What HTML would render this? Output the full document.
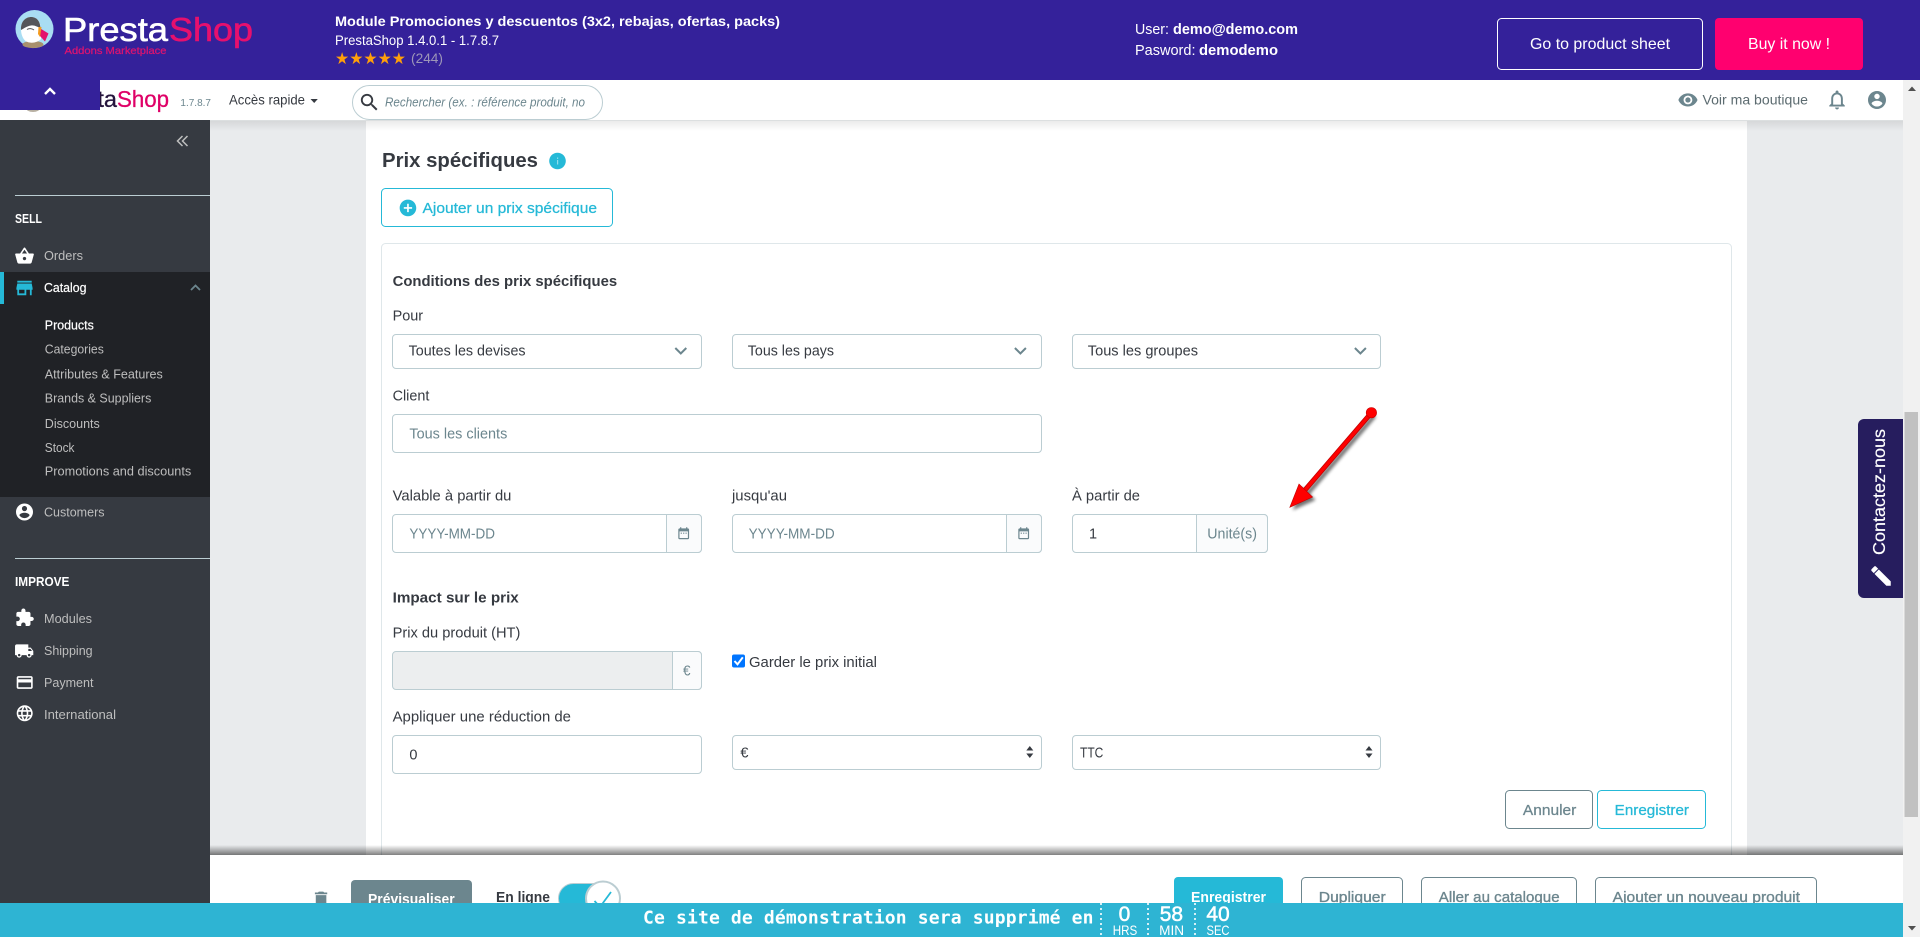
<!DOCTYPE html>
<html lang="fr">
<head>
<meta charset="utf-8">
<title>PrestaShop – Prix spécifiques</title>
<style>
html,body{margin:0;padding:0;width:1920px;height:937px;overflow:hidden;background:#e9ebed}
svg{display:block}
text{font-family:"Liberation Sans",Arial,sans-serif;white-space:pre}
.l{font-size:14.5px;fill:#363a41}
.h{font-size:14.5px;font-weight:700;fill:#363a41}
.p{font-size:14.5px;fill:#6c868e}
.s{font-size:13px;fill:#bebebe}
.bt{font-size:14.5px;fill:#6c868e;stroke:#6c868e;stroke-width:.35}
.box{fill:#fff;stroke:#bbcdd2;stroke-width:1}
.add{fill:#fafbfc;stroke:#bbcdd2;stroke-width:1}
.chev{fill:none;stroke:#6c868e;stroke-width:2}
</style>
</head>
<body>
<svg xmlns="http://www.w3.org/2000/svg" width="1920" height="937" viewBox="0 0 1920 937">
<defs>
<linearGradient id="gh" x1="0" y1="0" x2="0" y2="1"><stop offset="0" stop-color="#000" stop-opacity=".09"/><stop offset="1" stop-color="#000" stop-opacity="0"/></linearGradient>
<linearGradient id="gb" x1="0" y1="0" x2="0" y2="1"><stop offset="0" stop-color="#000" stop-opacity="0"/><stop offset="1" stop-color="#000" stop-opacity=".5"/></linearGradient>
<filter id="ash" x="-30%" y="-30%" width="160%" height="160%"><feGaussianBlur stdDeviation="1.6"/></filter>
</defs>

<!-- page background -->
<rect x="0" y="0" width="1920" height="937" fill="#e9ebed"/>
<rect x="1903" y="80" width="17" height="857" fill="#f1f1f1"/>

<!-- content panel -->
<rect x="366" y="120" width="1381" height="760" fill="#fff"/>

<g>
<text x="382" y="167" font-size="20.5" font-weight="700" fill="#363a41" textLength="156" lengthAdjust="spacingAndGlyphs">Prix spécifiques</text>
<circle cx="557.5" cy="161" r="8.3" fill="#25b9d7"/>
<rect x="557" y="160" width="1.2" height="4.5" fill="#8fdcec"/><rect x="557" y="157.5" width="1.2" height="1.4" fill="#8fdcec"/>

<rect x="381.5" y="188.5" width="231" height="38" rx="4" fill="#fff" stroke="#25b9d7"/>
<path transform="translate(398,198) scale(.83)" fill="#25b9d7" d="M12 2C6.48 2 2 6.48 2 12s4.48 10 10 10 10-4.48 10-10S17.52 2 12 2zm5 11h-4v4h-2v-4H7v-2h4V7h2v4h4v2z"/>
<text x="422.5" y="213" font-size="14.5" font-weight="400" fill="#25b9d7" stroke="#25b9d7" stroke-width=".25" textLength="174.5" lengthAdjust="spacingAndGlyphs">Ajouter un prix spécifique</text>

<rect x="381.5" y="243.5" width="1350" height="650" rx="4" fill="#fff" stroke="#dfe7ea"/>

<text class="h" x="392.6" y="286" textLength="224.5" lengthAdjust="spacingAndGlyphs">Conditions des prix spécifiques</text>

<text class="l" x="392.6" y="320.5" textLength="30.5" lengthAdjust="spacingAndGlyphs">Pour</text>
<rect class="box" x="392.5" y="334.5" width="309" height="34" rx="3.5"/>
<rect class="box" x="732.5" y="334.5" width="309" height="34" rx="3.5"/>
<rect class="box" x="1072.5" y="334.5" width="308" height="34" rx="3.5"/>
<text class="l" x="408.6" y="355.7" textLength="117" lengthAdjust="spacingAndGlyphs">Toutes les devises</text>
<text class="l" x="747.8" y="355.7" textLength="86.2" lengthAdjust="spacingAndGlyphs">Tous les pays</text>
<text class="l" x="1087.8" y="355.7" textLength="110.2" lengthAdjust="spacingAndGlyphs">Tous les groupes</text>
<polyline class="chev" points="675.3,348 680.8,353.5 686.3,348"/>
<polyline class="chev" points="1014.9,348 1020.4,353.5 1025.9,348"/>
<polyline class="chev" points="1354.9,348 1360.4,353.5 1365.9,348"/>

<text class="l" x="392.6" y="400.5" textLength="36.8" lengthAdjust="spacingAndGlyphs">Client</text>
<rect class="box" x="392.5" y="414.5" width="649" height="38" rx="3.5"/>
<text class="p" x="409.4" y="438.7" textLength="97.9" lengthAdjust="spacingAndGlyphs">Tous les clients</text>

<text class="l" x="392.6" y="500.5" textLength="118.8" lengthAdjust="spacingAndGlyphs">Valable à partir du</text>
<text class="l" x="732" y="500.5" textLength="55" lengthAdjust="spacingAndGlyphs">jusqu'au</text>
<text class="l" x="1072" y="500.5" textLength="68" lengthAdjust="spacingAndGlyphs">À partir de</text>

<rect class="box" x="392.5" y="514.5" width="309" height="38" rx="3.5"/>
<path class="add" d="M666.5 514.5H698a3.5 3.5 0 0 1 3.5 3.5V549a3.5 3.5 0 0 1-3.5 3.5H666.5z"/>
<path transform="translate(676.5,526) scale(.6)" fill="#6c868e" d="M9 11H7v2h2v-2zm4 0h-2v2h2v-2zm4 0h-2v2h2v-2zm2-7h-1V2h-2v2H8V2H6v2H5c-1.11 0-1.99.9-1.99 2L3 20c0 1.1.89 2 2 2h14c1.1 0 2-.9 2-2V6c0-1.1-.9-2-2-2zm0 16H5V9h14v11z"/>
<text class="p" x="409.4" y="538.7" textLength="85.6" lengthAdjust="spacingAndGlyphs">YYYY-MM-DD</text>

<rect class="box" x="732.5" y="514.5" width="309" height="38" rx="3.5"/>
<path class="add" d="M1006.5 514.5H1038a3.5 3.5 0 0 1 3.5 3.5V549a3.5 3.5 0 0 1-3.5 3.5H1006.5z"/>
<path transform="translate(1016.5,526) scale(.6)" fill="#6c868e" d="M9 11H7v2h2v-2zm4 0h-2v2h2v-2zm4 0h-2v2h2v-2zm2-7h-1V2h-2v2H8V2H6v2H5c-1.11 0-1.99.9-1.99 2L3 20c0 1.1.89 2 2 2h14c1.1 0 2-.9 2-2V6c0-1.1-.9-2-2-2zm0 16H5V9h14v11z"/>
<text class="p" x="748.6" y="538.7" textLength="86.1" lengthAdjust="spacingAndGlyphs">YYYY-MM-DD</text>

<rect class="box" x="1072.5" y="514.5" width="195" height="38" rx="3.5"/>
<path class="add" d="M1196.5 514.5H1264a3.5 3.5 0 0 1 3.5 3.5V549a3.5 3.5 0 0 1-3.5 3.5H1196.5z"/>
<text class="l" x="1089" y="538.7">1</text>
<text class="p" x="1207.3" y="538.7" textLength="49.7" lengthAdjust="spacingAndGlyphs">Unité(s)</text>

<text class="h" x="392.6" y="602.7" textLength="126.2" lengthAdjust="spacingAndGlyphs">Impact sur le prix</text>
<text class="l" x="392.6" y="637.5" textLength="127.8" lengthAdjust="spacingAndGlyphs">Prix du produit (HT)</text>

<rect x="392.5" y="651.5" width="309" height="38" rx="3.5" fill="#eceeef" stroke="#bbcdd2"/>
<path class="add" d="M672.5 651.5H698a3.5 3.5 0 0 1 3.5 3.5V686a3.5 3.5 0 0 1-3.5 3.5H672.5z"/>
<text class="p" x="683" y="675.7" textLength="7.5" lengthAdjust="spacingAndGlyphs">€</text>

<rect x="732" y="654.5" width="13" height="13" rx="2" fill="#0075ff"/>
<polyline points="734.5,661 737.5,664.3 742.8,657.3" fill="none" stroke="#fff" stroke-width="2"/>
<text class="l" x="749" y="667" textLength="128" lengthAdjust="spacingAndGlyphs">Garder le prix initial</text>

<text class="l" x="392.6" y="721.5" textLength="178.4" lengthAdjust="spacingAndGlyphs">Appliquer une réduction de</text>
<rect class="box" x="392.5" y="735.5" width="309" height="38" rx="3.5"/>
<text class="l" x="409.4" y="759.7">0</text>

<rect class="box" x="732.5" y="735.5" width="309" height="34" rx="3.5"/>
<text class="l" x="740.4" y="757.7">€</text>
<polygon points="1026.3,750.5 1029.8,746 1033.3,750.5" fill="#363a41"/>
<polygon points="1026.3,753.5 1029.8,758 1033.3,753.5" fill="#363a41"/>

<rect class="box" x="1072.5" y="735.5" width="308" height="34" rx="3.5"/>
<text class="l" x="1080" y="757.7" textLength="23.3" lengthAdjust="spacingAndGlyphs">TTC</text>
<polygon points="1365.5,750.5 1369,746 1372.5,750.5" fill="#363a41"/>
<polygon points="1365.5,753.5 1369,758 1372.5,753.5" fill="#363a41"/>

<rect x="1505.5" y="790.5" width="87" height="38" rx="4" fill="#fff" stroke="#6c868e"/>
<text class="l" x="1522.9" y="815" style="fill:#6c868e" stroke="#6c868e" stroke-width=".25" textLength="53.4" lengthAdjust="spacingAndGlyphs">Annuler</text>
<rect x="1597.5" y="790.5" width="108" height="38" rx="4" fill="#fff" stroke="#25b9d7"/>
<text class="l" x="1614.7" y="815" style="fill:#25b9d7" stroke="#25b9d7" stroke-width=".25" textLength="74.3" lengthAdjust="spacingAndGlyphs">Enregistrer</text>

<!-- red annotation arrow -->
<g transform="translate(3,3)" opacity=".55" filter="url(#ash)">
<line x1="1371.4" y1="412.7" x2="1305" y2="490" stroke="#000" stroke-width="4.5"/>
<polygon points="1289.8,507.3 1299,484 1312.6,497" fill="#000"/>
</g>
<line x1="1371.4" y1="412.7" x2="1305" y2="490" stroke="#c00000" stroke-width="5"/>
<line x1="1371.4" y1="412.7" x2="1305" y2="490" stroke="#ff0000" stroke-width="3.4"/>
<circle cx="1371.4" cy="412.7" r="5.2" fill="#ff0000" stroke="#c80000" stroke-width=".6"/>
<polygon points="1289.8,507.3 1299,484 1312.6,497" fill="#ff0000" stroke="#c00000" stroke-width=".6"/>
</g>

<!-- header -->
<rect x="210" y="120" width="1693" height="11" fill="url(#gh)"/>
<rect x="0" y="80" width="1903" height="40" fill="#fff"/>
<rect x="0" y="120" width="1903" height="1" fill="#dcdfe0"/>
<ellipse cx="33" cy="108" rx="7" ry="4" fill="#b8b0a2"/>
<text x="117" y="107" text-anchor="end" font-size="23.5" fill="#25143c" stroke="#25143c" stroke-width=".3">Presta</text>
<text x="117" y="107" font-size="23.5" fill="#df0067" stroke="#df0067" stroke-width=".3" textLength="52" lengthAdjust="spacingAndGlyphs">Shop</text>
<text x="180.4" y="106" font-size="10.5" fill="#6c868e" textLength="30.6" lengthAdjust="spacingAndGlyphs">1.7.8.7</text>
<text x="229" y="104.5" font-size="14" fill="#363a41" textLength="76" lengthAdjust="spacingAndGlyphs">Accès rapide</text>
<polygon points="310.5,99 317.8,99 314.2,103" fill="#363a41"/>
<rect x="352.5" y="85.5" width="250" height="34" rx="17" fill="#fff" stroke="#bbcdd2"/>
<path transform="translate(358,91) scale(.95)" fill="#363a41" d="M15.5 14h-.79l-.28-.27C15.41 12.59 16 11.11 16 9.5 16 5.91 13.09 3 9.5 3S3 5.91 3 9.5 5.91 16 9.5 16c1.61 0 3.09-.59 4.23-1.57l.27.28v.79l5 4.99L20.49 19l-4.99-5zm-6 0C7.01 14 5 11.99 5 9.5S7.01 5 9.5 5 14 7.01 14 9.5 11.99 14 9.5 14z"/>
<text x="385" y="106.5" font-size="13" font-style="italic" fill="#6c868e" textLength="200" lengthAdjust="spacingAndGlyphs">Rechercher (ex. : référence produit, no</text>
<path transform="translate(1677.5,89.5) scale(.87)" fill="#6c868e" d="M12 4.5C7 4.5 2.73 7.61 1 12c1.73 4.39 6 7.5 11 7.5s9.27-3.11 11-7.5c-1.73-4.39-6-7.5-11-7.5zM12 17c-2.76 0-5-2.24-5-5s2.24-5 5-5 5 2.24 5 5-2.24 5-5 5zm0-8c-1.66 0-3 1.34-3 3s1.34 3 3 3 3-1.34 3-3-1.34-3-3-3z"/>
<text x="1702.5" y="104.5" font-size="14" fill="#5c6b70" textLength="105.5" lengthAdjust="spacingAndGlyphs">Voir ma boutique</text>
<path transform="translate(1825.4,88.1) scale(.97)" fill="#6c868e" d="M12 22c1.1 0 2-.9 2-2h-4c0 1.1.9 2 2 2zm6-6v-5c0-3.07-1.63-5.64-4.5-6.32V4c0-.83-.67-1.5-1.5-1.5s-1.5.67-1.5 1.5v.68C7.64 5.36 6 7.92 6 11v5l-2 2v1h16v-1l-2-2zm-2 1H8v-6c0-2.48 1.51-4.5 4-4.5s4 2.02 4 4.5v6z"/>
<path transform="translate(1866.2,89.2) scale(.9)" fill="#6c868e" d="M12 2C6.48 2 2 6.48 2 12s4.48 10 10 10 10-4.48 10-10S17.52 2 12 2zm0 3c1.66 0 3 1.34 3 3s-1.34 3-3 3-3-1.34-3-3 1.34-3 3-3zm0 14.2c-2.5 0-4.71-1.28-6-3.22.03-1.99 4-3.08 6-3.08 1.99 0 5.97 1.09 6 3.08-1.29 1.94-3.5 3.22-6 3.22z"/>

<!-- sidebar -->
<rect x="0" y="120" width="210" height="783" fill="#363a41"/>
<path d="M182.5 136l-5 5 5 5M187.5 136l-5 5 5 5" fill="none" stroke="#bebebe" stroke-width="1.5"/>
<rect x="15" y="195" width="195" height="1" fill="#bbcdd2"/>
<text x="15" y="223" font-size="12.5" font-weight="700" fill="#fff" textLength="27" lengthAdjust="spacingAndGlyphs">SELL</text>
<path transform="translate(14.3,245.8) scale(.85)" fill="#fff" d="M17.21 9l-4.38-6.56c-.19-.28-.51-.42-.83-.42-.32 0-.64.14-.83.43L6.79 9H2c-.55 0-1 .45-1 1 0 .09.01.18.04.27l2.54 9.27c.23.84 1 1.46 1.92 1.46h13c.92 0 1.69-.62 1.93-1.46l2.54-9.27L23 10c0-.55-.45-1-1-1h-4.79zM9 9l3-4.4L15 9H9zm3 8c-1.1 0-2-.9-2-2s.9-2 2-2 2 .9 2 2-.9 2-2 2z"/>
<text class="s" x="44" y="260" textLength="39" lengthAdjust="spacingAndGlyphs">Orders</text>

<rect x="0" y="272" width="210" height="225" fill="#202226"/>
<rect x="0" y="272" width="4" height="32" fill="#25b9d7"/>
<path transform="translate(13.7,277.2) scale(.9)" fill="#25b9d7" d="M20 4H4v2h16V4zm1 10v-2l-1-5H4l-1 5v2h1v6h10v-6h4v6h2v-6h1zm-9 4H6v-4h6v4z"/>
<text x="44" y="292" font-size="13" fill="#fff" stroke="#fff" stroke-width=".2" textLength="42.5" lengthAdjust="spacingAndGlyphs">Catalog</text>
<polyline points="191,290 195.5,285.5 200,290" fill="none" stroke="#6c868e" stroke-width="1.8"/>
<text x="44.8" y="329.5" font-size="13" fill="#fff" stroke="#fff" stroke-width=".2" textLength="49" lengthAdjust="spacingAndGlyphs">Products</text>
<text class="s" x="44.8" y="353.5" textLength="59" lengthAdjust="spacingAndGlyphs">Categories</text>
<text class="s" x="44.8" y="378.5" textLength="118" lengthAdjust="spacingAndGlyphs">Attributes &amp; Features</text>
<text class="s" x="44.8" y="402.5" textLength="106.5" lengthAdjust="spacingAndGlyphs">Brands &amp; Suppliers</text>
<text class="s" x="44.8" y="428" textLength="55" lengthAdjust="spacingAndGlyphs">Discounts</text>
<text class="s" x="44.8" y="452" textLength="29.7" lengthAdjust="spacingAndGlyphs">Stock</text>
<text class="s" x="44.8" y="475.7" textLength="146.5" lengthAdjust="spacingAndGlyphs">Promotions and discounts</text>

<path transform="translate(14.3,501.8) scale(.85)" fill="#fff" d="M12 2C6.48 2 2 6.48 2 12s4.48 10 10 10 10-4.48 10-10S17.52 2 12 2zm0 3c1.66 0 3 1.34 3 3s-1.34 3-3 3-3-1.34-3-3 1.34-3 3-3zm0 14.2c-2.5 0-4.71-1.28-6-3.22.03-1.99 4-3.08 6-3.08 1.99 0 5.97 1.09 6 3.08-1.29 1.94-3.5 3.22-6 3.22z"/>
<text class="s" x="44" y="516.7" textLength="60.5" lengthAdjust="spacingAndGlyphs">Customers</text>
<rect x="15" y="558" width="195" height="1" fill="#bbcdd2"/>
<text x="15" y="586" font-size="12.5" font-weight="700" fill="#fff" textLength="54.4" lengthAdjust="spacingAndGlyphs">IMPROVE</text>
<path transform="translate(14.7,607.7) scale(.83)" fill="#fff" d="M20.5 11H19V7c0-1.1-.9-2-2-2h-4V3.5C13 2.12 11.88 1 10.5 1S8 2.12 8 3.5V5H4c-1.1 0-1.99.9-1.99 2v3.8H3.5c1.49 0 2.7 1.21 2.7 2.7s-1.21 2.7-2.7 2.7H2V20c0 1.1.9 2 2 2h3.8v-1.5c0-1.49 1.21-2.7 2.7-2.7 1.49 0 2.7 1.21 2.7 2.7V22H17c1.1 0 2-.9 2-2v-4h1.5c1.38 0 2.5-1.12 2.5-2.5S21.88 11 20.5 11z"/>
<text class="s" x="44" y="623" textLength="48" lengthAdjust="spacingAndGlyphs">Modules</text>
<path transform="translate(14.2,641) scale(.83)" fill="#fff" d="M20 8h-3V4H3c-1.1 0-2 .9-2 2v11h2c0 1.66 1.34 3 3 3s3-1.34 3-3h6c0 1.66 1.34 3 3 3s3-1.34 3-3h2v-5l-3-4zM6 18.5c-.83 0-1.5-.67-1.5-1.5s.67-1.5 1.5-1.5 1.5.67 1.5 1.5-.67 1.5-1.5 1.5zm13.5-9l1.96 2.5H17V9.5h2.5zm-1.5 9c-.83 0-1.5-.67-1.5-1.5s.67-1.5 1.5-1.5 1.5.67 1.5 1.5-.67 1.5-1.5 1.5z"/>
<text class="s" x="44" y="655" textLength="48.6" lengthAdjust="spacingAndGlyphs">Shipping</text>
<path transform="translate(15.1,672.9) scale(.8)" fill="#fff" d="M20 4H4c-1.11 0-1.99.89-1.99 2L2 18c0 1.11.89 2 2 2h16c1.11 0 2-.89 2-2V6c0-1.11-.89-2-2-2zm0 14H4v-6h16v6zm0-10H4V6h16v2z"/>
<text class="s" x="44" y="687" textLength="49.5" lengthAdjust="spacingAndGlyphs">Payment</text>
<path transform="translate(15.1,703.7) scale(.8)" fill="#fff" d="M11.99 2C6.47 2 2 6.48 2 12s4.47 10 9.99 10C17.52 22 22 17.52 22 12S17.52 2 11.99 2zm6.93 6h-2.95c-.32-1.25-.78-2.45-1.38-3.56 1.84.63 3.37 1.91 4.33 3.56zM12 4.04c.83 1.2 1.48 2.53 1.91 3.96h-3.82c.43-1.43 1.08-2.76 1.91-3.96zM4.26 14C4.1 13.36 4 12.69 4 12s.1-1.36.26-2h3.38c-.08.66-.14 1.32-.14 2 0 .68.06 1.34.14 2H4.26zm.82 2h2.95c.32 1.25.78 2.45 1.38 3.56-1.84-.63-3.37-1.9-4.33-3.56zm2.95-8H5.08c.96-1.66 2.49-2.93 4.33-3.56C8.81 5.55 8.35 6.75 8.03 8zM12 19.96c-.83-1.2-1.48-2.53-1.91-3.96h3.82c-.43 1.43-1.08 2.76-1.91 3.96zM14.34 14H9.66c-.09-.66-.16-1.32-.16-2 0-.68.07-1.35.16-2h4.68c.09.65.16 1.32.16 2 0 .68-.07 1.34-.16 2zm.25 5.56c.6-1.11 1.06-2.31 1.38-3.56h2.95c-.96 1.65-2.49 2.93-4.33 3.56zM16.36 14c.08-.66.14-1.32.14-2 0-.68-.06-1.34-.14-2h3.38c.16.64.26 1.31.26 2s-.1 1.36-.26 2h-3.38z"/>
<text class="s" x="44" y="719" textLength="72" lengthAdjust="spacingAndGlyphs">International</text>

<!-- top banner -->
<rect x="0" y="0" width="1920" height="80" fill="#34219a"/>
<circle cx="34.5" cy="29" r="19" fill="#a9ddf3"/>
<ellipse cx="33" cy="44.5" rx="10.5" ry="3.6" fill="#a8906e"/>
<path d="M21 29C21 21 26 17 31 17 36 17 40 20 40.5 27L41 39C37 43.5 28 44 24.5 40 22 37 21 33 21 29Z" fill="#fff"/>
<path d="M21 30C20.5 21 26 17 31 17 36 17 40 20 40.5 28 37 27 35 25 31 25.5 27 26 24 28.5 21 30Z" fill="#55565a"/>
<path d="M27 29.5C29 28 32 28.5 34 30" fill="none" stroke="#555" stroke-width="1"/>
<polygon points="39.5,28 48.5,33.5 45,41.5 40,36" fill="#e4126c"/>
<polygon points="38.5,27 41.5,27 40,37 38,34" fill="#f39a1e"/>

<text x="63" y="41" font-size="33.5" fill="#fff" stroke="#fff" stroke-width=".6" textLength="105" lengthAdjust="spacingAndGlyphs">Presta</text>
<text x="169" y="41" font-size="33.5" fill="#e6106e" stroke="#e6106e" stroke-width=".6" textLength="84" lengthAdjust="spacingAndGlyphs">Shop</text>
<text x="64.5" y="54" font-size="10.5" fill="#dc1470" stroke="#dc1470" stroke-width=".25" textLength="102" lengthAdjust="spacingAndGlyphs">Addons Marketplace</text>

<text x="335" y="26" font-size="14" font-weight="700" fill="#fff" textLength="445" lengthAdjust="spacingAndGlyphs">Module Promociones y descuentos (3x2, rebajas, ofertas, packs)</text>
<text x="335" y="45" font-size="13.5" fill="#fff" textLength="164" lengthAdjust="spacingAndGlyphs">PrestaShop 1.4.0.1 - 1.7.8.7</text>
<text x="335" y="64" font-size="16.5" fill="#ff9f0a" style="font-family:'DejaVu Sans',sans-serif" textLength="71" lengthAdjust="spacingAndGlyphs">★★★★★</text>
<text x="411" y="63" font-size="13.5" fill="#9d96b8" textLength="32" lengthAdjust="spacingAndGlyphs">(244)</text>

<text x="1135" y="34" font-size="15" fill="#fff" textLength="34" lengthAdjust="spacingAndGlyphs">User:</text>
<text x="1173" y="34" font-size="15" font-weight="700" fill="#fff" textLength="125" lengthAdjust="spacingAndGlyphs">demo@demo.com</text>
<text x="1135" y="55" font-size="15" fill="#fff" textLength="60.5" lengthAdjust="spacingAndGlyphs">Pasword:</text>
<text x="1199" y="55" font-size="15" font-weight="700" fill="#fff" textLength="79" lengthAdjust="spacingAndGlyphs">demodemo</text>

<rect x="1497.5" y="18.5" width="205" height="51" rx="4" fill="#34219a" stroke="#fff"/>
<text x="1530" y="49" font-size="16" fill="#fff" textLength="140" lengthAdjust="spacingAndGlyphs">Go to product sheet</text>
<rect x="1715" y="18" width="148" height="52" rx="4" fill="#ff006f"/>
<text x="1748" y="49" font-size="16" fill="#fff" textLength="82" lengthAdjust="spacingAndGlyphs">Buy it now !</text>

<!-- collapse tab -->
<rect x="0" y="80" width="100" height="30" fill="#34219a"/>
<polyline points="45,94 50,89 55,94" fill="none" stroke="#fff" stroke-width="2.4"/>

<!-- scrollbar -->
<polygon points="1908,91 1916,91 1912,86.5" fill="#505050"/>
<rect x="1904.5" y="412" width="13.5" height="405" fill="#c1c1c1"/>
<polygon points="1908,926 1916,926 1912,930.5" fill="#505050"/>

<!-- contact tab -->
<path d="M1903 419H1864a6 6 0 0 0-6 6V592a6 6 0 0 0 6 6H1903Z" fill="#261d5e"/>
<text transform="translate(1885,555) rotate(-90)" font-size="17.5" fill="#fff" stroke="#fff" stroke-width=".15" textLength="126" lengthAdjust="spacingAndGlyphs">Contactez-nous</text>
<path transform="translate(1881,576) rotate(-90) scale(1.05) translate(-12,-12)" fill="#fff" stroke="#fff" stroke-width=".6" d="M3 17.25V21h3.75L17.81 9.94l-3.75-3.75L3 17.25zM20.71 7.04c.39-.39.39-1.02 0-1.41l-2.34-2.34c-.39-.39-1.02-.39-1.41 0l-1.83 1.83 3.75 3.75 1.83-1.83z"/>

<!-- bottom action bar -->
<rect x="210" y="845" width="1693" height="10" fill="url(#gb)"/>
<rect x="210" y="855" width="1693" height="82" fill="#fff"/>
<path transform="translate(310.5,889) scale(.88)" fill="#6c868e" d="M6 19c0 1.1.9 2 2 2h8c1.1 0 2-.9 2-2V7H6v12zM19 4h-3.5l-1-1h-5l-1 1H5v2h14V4z"/>
<rect x="351" y="880" width="121" height="50" rx="4" fill="#6c868e"/>
<text x="368" y="904" font-size="14.5" font-weight="700" fill="#fff" textLength="86.7" lengthAdjust="spacingAndGlyphs">Prévisualiser</text>
<text x="496" y="902" font-size="14.5" font-weight="700" fill="#363a41" textLength="54" lengthAdjust="spacingAndGlyphs">En ligne</text>
<rect x="558.5" y="883.5" width="50" height="30" rx="15" fill="#25b9d7" stroke="#bbcdd2"/>
<circle cx="603" cy="898.5" r="17" fill="#fff" stroke="#bbcdd2" stroke-width="2"/>
<polyline points="594.5,901 600,907 611,892" fill="none" stroke="#25b9d7" stroke-width="1.8"/>

<rect x="1174" y="877" width="109" height="50" rx="4" fill="#25b9d7"/>
<text x="1191" y="902" font-size="14.5" font-weight="700" fill="#fff" textLength="75" lengthAdjust="spacingAndGlyphs">Enregistrer</text>
<rect x="1301.5" y="877.5" width="101" height="50" rx="4" fill="#fff" stroke="#6c868e"/>
<text class="bt" x="1318.8" y="902" textLength="66.9" lengthAdjust="spacingAndGlyphs">Dupliquer</text>
<rect x="1421.5" y="877.5" width="155" height="50" rx="4" fill="#fff" stroke="#6c868e"/>
<text class="bt" x="1438.8" y="902" textLength="120.8" lengthAdjust="spacingAndGlyphs">Aller au catalogue</text>
<rect x="1595.5" y="877.5" width="221" height="50" rx="4" fill="#fff" stroke="#6c868e"/>
<text class="bt" x="1612.7" y="902" textLength="187.3" lengthAdjust="spacingAndGlyphs">Ajouter un nouveau produit</text>

<!-- demo footer -->
<rect x="0" y="903" width="1903" height="34" fill="#2eb4d3"/>
<text x="643" y="923.7" font-size="18" font-weight="700" fill="#fff" style="font-family:'DejaVu Sans Mono','Liberation Mono',monospace" textLength="450.5" lengthAdjust="spacing">Ce site de démonstration sera supprimé en</text>
<line x1="1101" y1="903" x2="1101" y2="937" stroke="#fff" stroke-width="1.6" stroke-dasharray="2 3"/>
<line x1="1148" y1="903" x2="1148" y2="937" stroke="#fff" stroke-width="1.6" stroke-dasharray="2 3"/>
<line x1="1195" y1="903" x2="1195" y2="937" stroke="#fff" stroke-width="1.6" stroke-dasharray="2 3"/>
<g fill="#fff" text-anchor="middle">
<text x="1124.5" y="921" font-size="21" stroke="#fff" stroke-width=".5">0</text>
<text x="1171.4" y="921" font-size="21" stroke="#fff" stroke-width=".5">58</text>
<text x="1218" y="921" font-size="21" stroke="#fff" stroke-width=".5">40</text>
<text x="1125" y="935" font-size="14" textLength="24.5" lengthAdjust="spacingAndGlyphs">HRS</text>
<text x="1171.6" y="935" font-size="14" textLength="25" lengthAdjust="spacingAndGlyphs">MIN</text>
<text x="1218" y="935" font-size="14" textLength="23" lengthAdjust="spacingAndGlyphs">SEC</text>
</g>
</svg>
</body>
</html>
